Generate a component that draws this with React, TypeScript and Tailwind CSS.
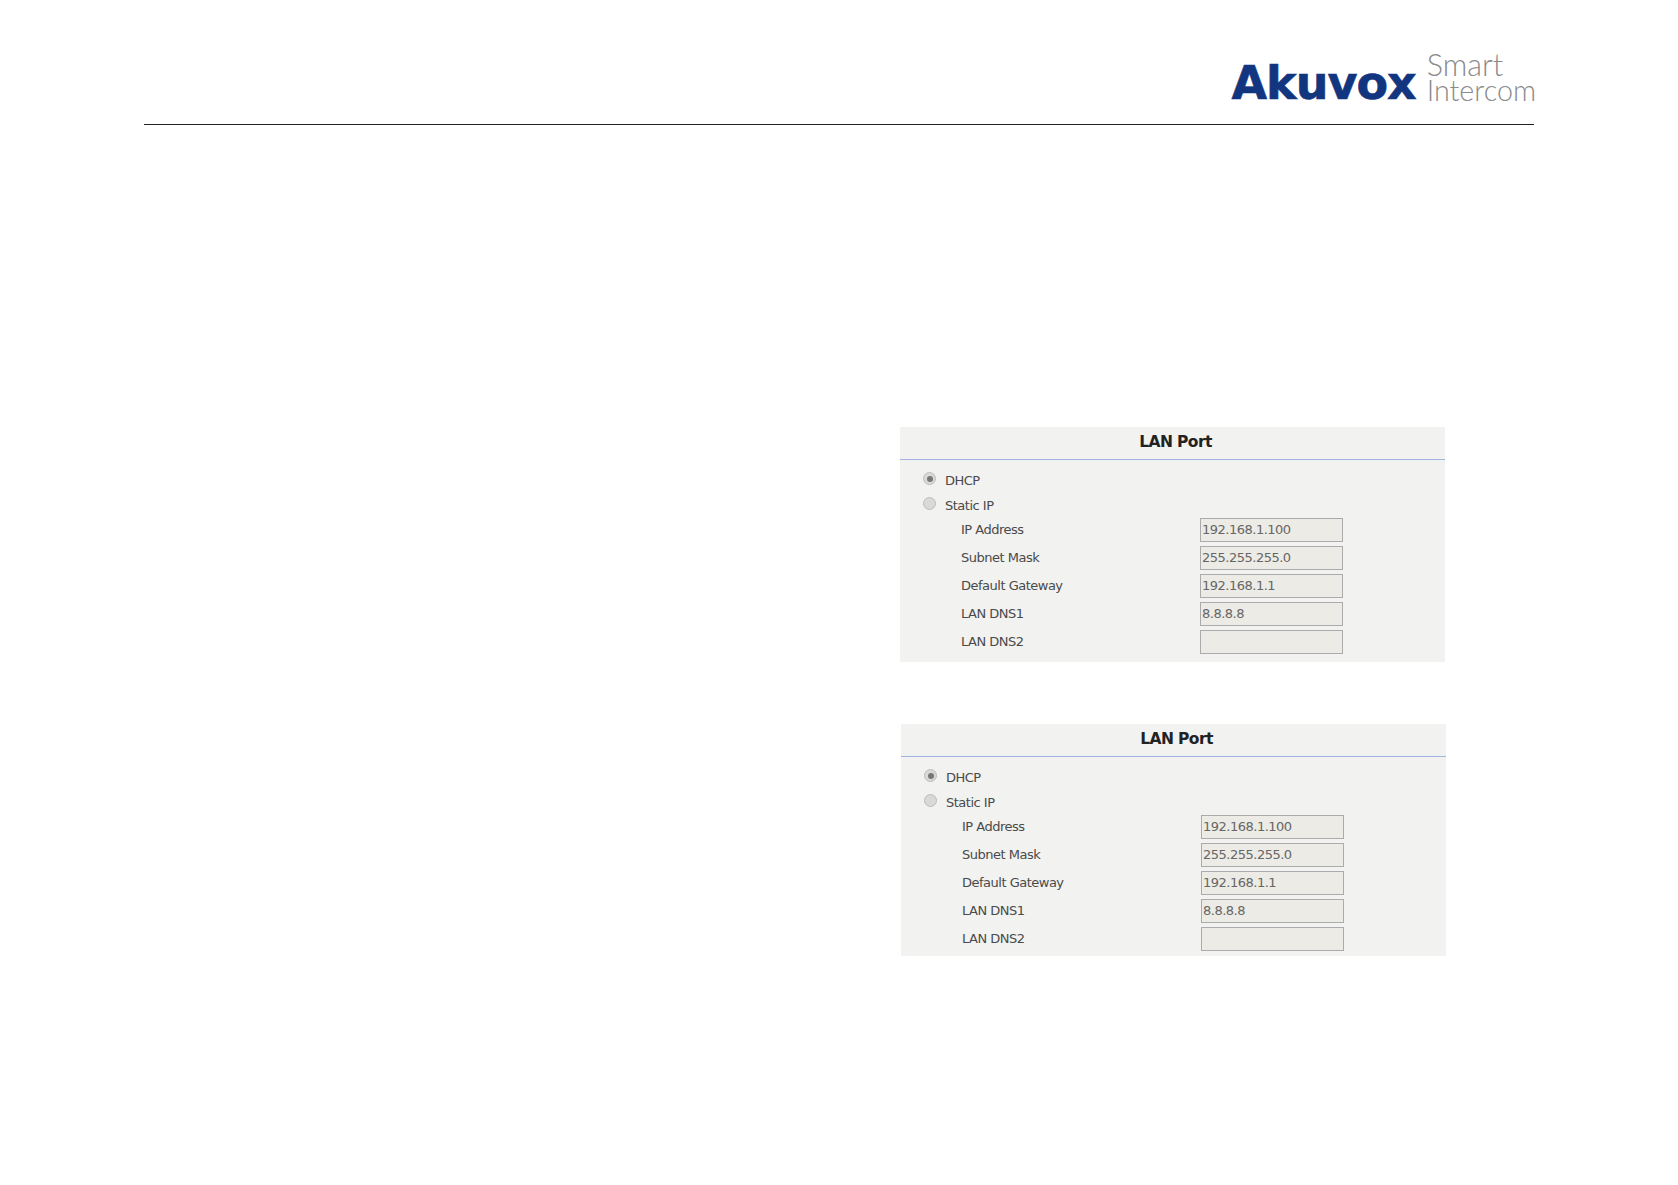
import React from 'react';

const fields = [
  { label: 'IP Address', value: '192.168.1.100' },
  { label: 'Subnet Mask', value: '255.255.255.0' },
  { label: 'Default Gateway', value: '192.168.1.1' },
  { label: 'LAN DNS1', value: '8.8.8.8' },
  { label: 'LAN DNS2', value: '' },
];

const Radio = ({ checked }: { checked?: boolean }) => (
  <span className="flex h-[13px] w-[13px] shrink-0 items-center justify-center rounded-full border border-[#bdbdbd] bg-[#d9d9d9]">
    {checked && <span className="h-[6px] w-[6px] rounded-full bg-[#777777]" />}
  </span>
);

const LanPanel = ({ className }: { className: string }) => (
  <section className={`w-[545px] bg-[#f2f2f1] font-['DejaVu_Sans',sans-serif] text-[#4a4a4a] ${className}`}>
    <h2 className="flex h-[33px] items-center justify-center border-b border-[#a3b3e2] pl-[6px] text-[15.5px] font-bold tracking-[-0.6px] text-[#222222]">
      LAN Port
    </h2>
    <div className="pl-[23px] pt-[8px] text-[13px] tracking-[-0.5px]">
      <div className="flex h-[25px] items-center gap-[9px]">
        <span className="-mt-[4px]"><Radio checked /></span>
        <span>DHCP</span>
      </div>
      <div className="flex h-[25px] items-center gap-[9px]">
        <span className="-mt-[4px]"><Radio /></span>
        <span>Static IP</span>
      </div>
    </div>
    <div className="flex flex-col gap-[4px] pl-[61px] text-[13px] tracking-[-0.5px]">
      {fields.map((f) => (
        <div key={f.label} className="flex h-[24px] items-center">
          <span className="w-[239px]">{f.label}</span>
          <div className="flex h-[24px] w-[143px] items-center border border-[#ababab] bg-[#ecebe5] pl-[1px] text-[#666666]">
            {f.value}
          </div>
        </div>
      ))}
    </div>
  </section>
);

const Logo = () => (
  <div className="-mr-[2px] flex items-end gap-[11px]">
    <span className="font-['DejaVu_Sans',sans-serif] text-[46px] font-bold leading-[40px] tracking-[-1px] text-[#12357f] [-webkit-text-stroke:0.6px_#12357f]">
      Akuvox
    </span>
    <div className="flex flex-col font-['Lato',sans-serif] font-light text-[#8a8a8a]">
      <span className="text-[30.5px] leading-[28px]">Smart</span>
      <span className="text-[28.7px] leading-[25px]">Intercom</span>
    </div>
  </div>
);

export default function App() {
  return (
    <div className="h-[1185px] w-[1678px] overflow-hidden bg-white">
      <header className="ml-[144px] flex h-[125px] w-[1390px] items-end justify-end border-b border-[#222222] pb-[21px]">
        <Logo />
      </header>
      <main>
        <LanPanel className="ml-[900px] mt-[302px] pb-[8px]" />
        <LanPanel className="ml-[901px] mt-[62px] pb-[5px]" />
      </main>
    </div>
  );
}
